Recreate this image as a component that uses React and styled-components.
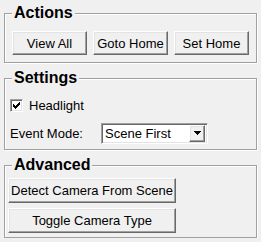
import React from "react";
import styled, { createGlobalStyle } from "styled-components";

const Global = createGlobalStyle`
  html, body { margin: 0; padding: 0; background: #f0f0f0; }
  body { font-family: "Liberation Sans", Arial, sans-serif; color: #000; }
`;

const Page = styled.div`
  width: 261px;
  box-sizing: border-box;
  padding: 4px 4px 0 4px;
  display: flex;
  flex-direction: column;
  gap: 6px;
`;

const Group = styled.fieldset`
  margin: 0;
  padding: 0;
  min-width: 0;
  border: 1px solid #a0a0a0;
  box-shadow: inset 1px 1px 0 #fff, 1px 1px 0 #fff;
`;

const Title = styled.legend`
  margin-left: 7px;
  padding: 0 2px;
  font: bold 16px/18px "Liberation Sans", Arial, sans-serif;
  background: #f0f0f0;
  color: #000;
`;

const Body = styled.div`
  padding: ${(p) => p.$pad};
  display: flex;
  flex-direction: ${(p) => p.$dir || "row"};
  gap: ${(p) => p.$gap || 0}px;
`;

const Button = styled.button`
  box-sizing: border-box;
  width: ${(p) => p.$w}px;
  height: ${(p) => p.$h}px;
  padding: 0;
  margin: 0;
  white-space: nowrap;
  font: 13px "Liberation Sans", Arial, sans-serif;
  color: #000;
  background: #f0f0f0;
  border: 1px solid;
  border-color: #fff #696969 #696969 #fff;
  box-shadow: inset -1px -1px 0 #a0a0a0, inset 1px 1px 0 #e3e3e3;
`;

const Row = styled.div`
  display: flex;
  align-items: center;
  height: ${(p) => p.$h}px;
  font: 13px/15px "Liberation Sans", Arial, sans-serif;
`;

const CheckBox = styled.span`
  box-sizing: border-box;
  width: 13px;
  height: 13px;
  background: #fff;
  border: 1px solid;
  border-color: #a0a0a0 #fff #fff #a0a0a0;
  box-shadow: inset 1px 1px 0 #696969, inset -1px -1px 0 #e3e3e3;
  display: flex;
  padding: 2px;
  margin-right: 6px;
`;

const Label = styled.span`
  width: ${(p) => p.$w}px;
  flex: none;
`;

const Combo = styled.div`
  box-sizing: border-box;
  width: 107px;
  height: 21px;
  display: flex;
  align-items: center;
  background: #fff;
  border: 1px solid;
  border-color: #a0a0a0 #fff #fff #a0a0a0;
  box-shadow: inset 1px 1px 0 #696969, inset -1px -1px 0 #e3e3e3;
  padding: 1px 2px 2px 3px;
`;

const ComboText = styled.span`
  flex: 1;
  font: 13px/15px "Liberation Sans", Arial, sans-serif;
`;

const ArrowBtn = styled.span`
  box-sizing: border-box;
  width: 16px;
  height: 17px;
  display: flex;
  align-items: center;
  justify-content: center;
  background: #f0f0f0;
  border: 1px solid;
  border-color: #fff #696969 #696969 #fff;
  box-shadow: inset -1px -1px 0 #a0a0a0, inset 1px 1px 0 #e3e3e3;
`;

const checkRows = [
  [6, 0, 1],
  [5, 1, 2],
  [0, 2, 1],
  [4, 2, 3],
  [0, 3, 2],
  [3, 3, 3],
  [0, 4, 5],
  [1, 5, 3],
  [2, 6, 1],
];

export default function App() {
  return (
    <>
      <Global />
      <Page>
        <Group>
          <Title>Actions</Title>
          <Body $pad="9px 0 7px 7px" $gap={6}>
            <Button $w={75} $h={24}>View All</Button>
            <Button $w={75} $h={24}>Goto Home</Button>
            <Button $w={75} $h={24}>Set Home</Button>
          </Body>
        </Group>
        <Group>
          <Title>Settings</Title>
          <Body $pad="11px 0 5px 5px" $dir="column" $gap={10}>
            <Row $h={15}>
              <CheckBox>
                <svg width="7" height="7" viewBox="0 0 7 7" shapeRendering="crispEdges">
                  {checkRows.map(([x, y, w], i) => (
                    <rect key={i} x={x} y={y} width={w} height={1} fill="#000" />
                  ))}
                </svg>
              </CheckBox>
              Headlight
            </Row>
            <Row $h={21}>
              <Label $w={91}>Event Mode:</Label>
              <Combo>
                <ComboText>Scene First</ComboText>
                <ArrowBtn>
                  <svg width="7" height="4" viewBox="0 0 7 4" shapeRendering="crispEdges">
                    <polygon points="0,0 7,0 3.5,4" fill="#000" />
                  </svg>
                </ArrowBtn>
              </Combo>
            </Row>
          </Body>
        </Group>
        <Group>
          <Title>Advanced</Title>
          <Body $pad="4px 0 4px 3px" $dir="column" $gap={5}>
            <Button $w={168} $h={25}>Detect Camera From Scene</Button>
            <Button $w={168} $h={25}>Toggle Camera Type</Button>
          </Body>
        </Group>
      </Page>
    </>
  );
}
